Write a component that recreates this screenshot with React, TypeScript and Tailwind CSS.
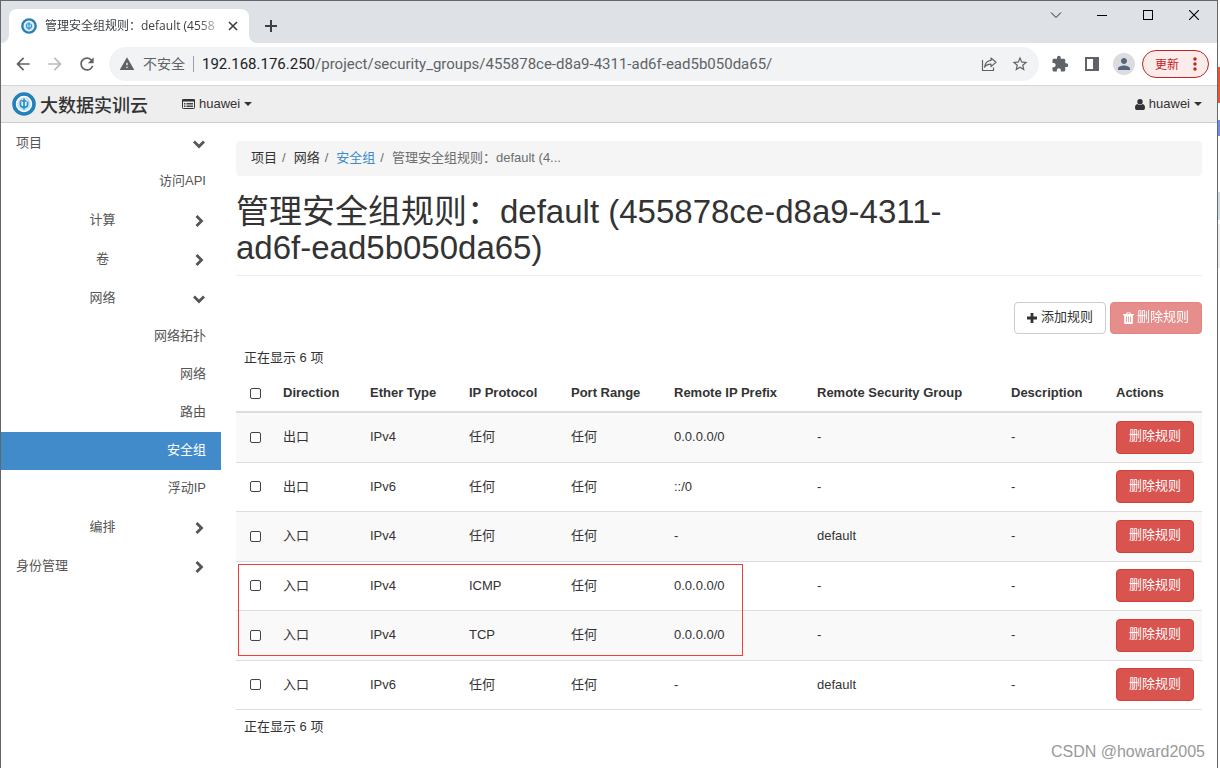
import React from 'react';
import { clsx } from 'clsx';
import {
  MdArrowBack,
  MdArrowForward,
  MdExtension,
  MdMoreVert,
  MdPerson,
  MdRefresh,
  MdStarBorder,
  MdWarning,
} from 'react-icons/md';

interface Rule {
  direction: string;
  etherType: string;
  protocol: string;
  portRange: string;
  prefix: string;
  group: string;
  description: string;
}

const RULES: Rule[] = [
  { direction: '出口', etherType: 'IPv4', protocol: '任何', portRange: '任何', prefix: '0.0.0.0/0', group: '-', description: '-' },
  { direction: '出口', etherType: 'IPv6', protocol: '任何', portRange: '任何', prefix: '::/0', group: '-', description: '-' },
  { direction: '入口', etherType: 'IPv4', protocol: '任何', portRange: '任何', prefix: '-', group: 'default', description: '-' },
  { direction: '入口', etherType: 'IPv4', protocol: 'ICMP', portRange: '任何', prefix: '0.0.0.0/0', group: '-', description: '-' },
  { direction: '入口', etherType: 'IPv4', protocol: 'TCP', portRange: '任何', prefix: '0.0.0.0/0', group: '-', description: '-' },
  { direction: '入口', etherType: 'IPv6', protocol: '任何', portRange: '任何', prefix: '-', group: 'default', description: '-' },
];

const COLUMNS = [
  'Direction',
  'Ether Type',
  'IP Protocol',
  'Port Range',
  'Remote IP Prefix',
  'Remote Security Group',
  'Description',
  'Actions',
];

interface NavItem {
  label: string;
  kind: 'root' | 'group' | 'leaf';
  open?: boolean;
  active?: boolean;
}

const NAV: NavItem[] = [
  { label: '项目', kind: 'root', open: true },
  { label: '访问API', kind: 'leaf' },
  { label: '计算', kind: 'group' },
  { label: '卷', kind: 'group' },
  { label: '网络', kind: 'group', open: true },
  { label: '网络拓扑', kind: 'leaf' },
  { label: '网络', kind: 'leaf' },
  { label: '路由', kind: 'leaf' },
  { label: '安全组', kind: 'leaf', active: true },
  { label: '浮动IP', kind: 'leaf' },
  { label: '编排', kind: 'group' },
  { label: '身份管理', kind: 'root' },
];

const Emblem: React.FC<{ className?: string }> = ({ className }) => (
  <svg viewBox="0 0 24 24" className={className} aria-hidden="true">
    <circle cx="12" cy="12" r="10" fill="#fff" stroke="#2480b8" strokeWidth="3.6" />
    <circle cx="12" cy="12" r="6.2" fill="#d9edf8" stroke="#a5d3ec" strokeWidth="0.8" />
    <path
      d="M12 6.5v11M8.4 9.5v3.2c0 2 1.5 2.6 3.6 2.6s3.6-.6 3.6-2.6V9.5M9.5 9h5"
      fill="none"
      stroke="#2a8fcb"
      strokeWidth="1.7"
    />
    <path d="M8.2 9.2 10 8" stroke="#d9534f" strokeWidth="1.2" />
  </svg>
);

const ShareIcon: React.FC = () => (
  <svg viewBox="0 0 16 16" className="size-4" fill="none" stroke="#5f6368" strokeWidth="1.2" aria-hidden="true">
    <path d="M1.5 4v10.5h11V11.5" />
    <path d="M10 2l5 4.300-5 4.300V8.200c-3 0-4.900.8-6.400 3C4 7.500 6.200 4.800 10 4.400z" strokeLinejoin="round" />
  </svg>
);

const SidePanelIcon: React.FC = () => (
  <svg viewBox="0 0 14 14" className="size-3.5" aria-hidden="true">
    <path d="M0 0h14v14H0zM2 2v10h6V2z" fill="#5f6368" fillRule="evenodd" />
  </svg>
);

const Chevron: React.FC<{ open?: boolean }> = ({ open }) => (
  <svg
    viewBox="0 0 14 14"
    className="size-3.5"
    fill="none"
    stroke="currentColor"
    strokeWidth="2.8"
    aria-hidden="true"
  >
    <path d={open ? 'M2 4.500l5 5 5-5' : 'M4.500 2l5 5-5 5'} />
  </svg>
);

const Caret: React.FC = () => (
  <svg viewBox="0 0 8 4" className="ml-1 h-1 w-2" fill="currentColor" aria-hidden="true">
    <path d="M0 0h8L4 4z" />
  </svg>
);

const ListAltIcon: React.FC = () => (
  <svg viewBox="0 0 13 10" className="mr-1 h-2.5 w-[13px]" fill="none" stroke="currentColor" aria-hidden="true">
    <rect x="0.5" y="0.5" width="12" height="9" rx="0.8" />
    <path d="M0 1.500h13" strokeWidth="2" />
    <path d="M2 4.500h1.500M4.500 4.500H11M2 7.500h1.500M4.500 7.500H11M2 6h1.500M4.500 6H11" strokeWidth="0.9" />
  </svg>
);

const UserIcon: React.FC = () => (
  <svg viewBox="0 0 10 11" className="mr-1 h-[11px] w-2.5" fill="currentColor" aria-hidden="true">
    <circle cx="5" cy="2.800" r="2.700" />
    <path d="M2.400 4.900C.8 5.200 0 6.600 0 8.700 0 10.200.8 11 2 11h6c1.200 0 2-.8 2-2.300 0-2.100-.8-3.500-2.400-3.800a3.500 3.500 0 0 1-5.200 0z" />
  </svg>
);

const PlusIcon: React.FC = () => (
  <svg viewBox="0 0 10 10" className="mr-1 size-2.5" stroke="currentColor" strokeWidth="2.800" aria-hidden="true">
    <path d="M5 0v10M0 5h10" />
  </svg>
);

const TrashIcon: React.FC = () => (
  <svg viewBox="0 0 11 12" className="mr-[3px] h-3 w-[11px]" aria-hidden="true">
    <path
      d="M0 2h3l.6-1.500h3.800L8 2h3v1.200H9.900V11a1 1 0 0 1-1 1H2.100a1 1 0 0 1-1-1V3.200H0zM4.200 2h2.600l-.3-.7h-2z"
      fill="currentColor"
      fillRule="evenodd"
    />
    <path d="M3.500 4.600v5.500M5.500 4.600v5.500M7.500 4.600v5.500" stroke="#d9534f" strokeWidth="0.8" />
  </svg>
);

const TabStrip: React.FC = () => (
  <div className="flex h-[42px] items-end bg-[#dee1e6] pl-2">
    <div className="relative flex h-[34px] w-60 items-center rounded-t-lg bg-white pr-2 pl-3">
      <svg viewBox="0 0 8 8" className="absolute bottom-0 -left-2 size-2" aria-hidden="true">
        <path d="M8 0v8H0a8 8 0 0 0 8-8z" fill="#fff" />
      </svg>
      <svg viewBox="0 0 8 8" className="absolute -right-2 bottom-0 size-2" aria-hidden="true">
        <path d="M0 0v8h8a8 8 0 0 1-8-8z" fill="#fff" />
      </svg>
      <Emblem className="size-4 shrink-0" />
      <span className="ml-2 flex-1 whitespace-nowrap font-['Open_Sans','Noto_Sans_CJK_SC',sans-serif] text-xs text-[#3c4043] [mask-image:linear-gradient(to_right,black_85%,transparent)]">
        管理安全组规则：default (4558
      </span>
      <button type="button" aria-label="关闭标签页" className="flex size-4 items-center justify-center">
        <svg viewBox="0 0 10 10" className="size-2.5" stroke="#3c4043" strokeWidth="1.6" aria-hidden="true">
          <path d="M1 1l8 8M9 1L1 9" />
        </svg>
      </button>
    </div>
    <button type="button" aria-label="新标签页" className="mb-[10px] ml-[15px] flex size-3.5">
      <svg viewBox="0 0 14 14" className="size-3.5" stroke="#3c4043" strokeWidth="2" aria-hidden="true">
        <path d="M7 1v12M1 7h12" />
      </svg>
    </button>
    <div className="ml-auto flex items-center self-start pt-1">
      <button type="button" aria-label="搜索标签页" className="flex h-5 w-[46px] items-center justify-center">
        <svg viewBox="0 0 12 12" className="size-3" fill="none" stroke="#222" aria-hidden="true">
          <path d="M1 3.500l5 5 5-5" />
        </svg>
      </button>
      <button type="button" aria-label="最小化" className="flex h-5 w-[46px] items-center justify-center">
        <span className="h-px w-2.5 bg-black" />
      </button>
      <button type="button" aria-label="最大化" className="flex h-5 w-[46px] items-center justify-center">
        <span className="size-2.5 border border-black" />
      </button>
      <button type="button" aria-label="关闭" className="flex h-5 w-[46px] items-center justify-center">
        <svg viewBox="0 0 10 10" className="size-2.5" stroke="#000" strokeWidth="1.1" aria-hidden="true">
          <path d="M0 0l10 10M10 0L0 10" />
        </svg>
      </button>
    </div>
  </div>
);

const Toolbar: React.FC = () => (
  <div className="flex h-[43px] items-center border-b border-[#d5d6d8] bg-white pr-2 pl-3 text-[#5f6368]">
    <button type="button" aria-label="后退"><MdArrowBack className="size-5" /></button>
    <button type="button" aria-label="前进" className="ml-3 text-[#b8babd]"><MdArrowForward className="size-5" /></button>
    <button type="button" aria-label="重新加载" className="ml-3"><MdRefresh className="size-5" /></button>
    <div className="ml-3 flex h-[34px] flex-1 items-center rounded-full bg-[#f1f3f4] px-2.5 font-['Roboto','Noto_Sans_CJK_SC',sans-serif] text-[15px]">
      <MdWarning className="size-4" />
      <span className="ml-2 text-sm">不安全</span>
      <span className="mx-2 h-4 w-px bg-[#9aa0a6]" />
      <span className="flex-1 whitespace-nowrap">
        <span className="text-[#202124]">192.168.176.250</span>
        /project/security_groups/455878ce-d8a9-4311-ad6f-ead5b050da65/
      </span>
      <button type="button" aria-label="分享"><ShareIcon /></button>
      <button type="button" aria-label="收藏" className="ml-3.5"><MdStarBorder className="size-[18px]" /></button>
    </div>
    <button type="button" aria-label="扩展程序" className="ml-3"><MdExtension className="size-[18px]" /></button>
    <button type="button" aria-label="侧边栏" className="ml-4"><SidePanelIcon /></button>
    <button
      type="button"
      aria-label="个人资料"
      className="ml-3.5 flex size-[22px] items-center justify-center rounded-full bg-[#dadce0] text-[#56647c]"
    >
      <MdPerson className="size-[18px]" />
    </button>
    <button
      type="button"
      className="ml-[7px] flex h-7 w-[67px] items-center rounded-full border border-[#c5221f] bg-[#faeceb] pl-3 font-['Noto_Sans_CJK_SC',sans-serif] text-xs text-[#c5221f]"
    >
      更新
      <MdMoreVert className="ml-1.5 size-5 shrink-0" />
    </button>
  </div>
);

const SiteHeader: React.FC = () => (
  <header className="flex h-[37px] items-center border-b border-[#ccc] bg-[#eee] pr-[15px] pl-[11px] text-[#333]">
    <a href="#" className="flex items-center">
      <Emblem className="size-6" />
      <span className="ml-1 font-['Noto_Sans_CJK_SC',sans-serif] text-lg leading-6 font-medium">大数据实训云</span>
    </a>
    <button type="button" className="ml-[34px] flex items-center">
      <ListAltIcon />
      huawei
      <Caret />
    </button>
    <button type="button" className="ml-auto flex items-center">
      <UserIcon />
      huawei
      <Caret />
    </button>
  </header>
);

const Sidebar: React.FC = () => (
  <nav className="w-[220px] shrink-0 pt-px text-[#555]">
    {NAV.map((item, i) => {
      if (item.kind === 'leaf') {
        return (
          <a
            key={i}
            href="#"
            className={clsx(
              'flex h-[38px] items-center justify-end pr-[15px] pb-0.5',
              item.active && 'bg-[#428bca] text-white'
            )}
          >
            {item.label}
          </a>
        );
      }
      return (
        <button
          key={i}
          type="button"
          className={clsx(
            'flex h-[39px] w-full items-center pr-[15px]',
            item.kind === 'root' ? 'pl-[15px]' : 'pl-3'
          )}
        >
          <span className={clsx('flex-1 pb-0.5', item.kind === 'root' ? 'text-left' : 'text-center')}>
            {item.label}
          </span>
          <Chevron open={item.open} />
        </button>
      );
    })}
  </nav>
);

const Breadcrumb: React.FC = () => (
  <ol className="flex h-[35px] items-center rounded bg-[#f5f5f5] px-[15px] pb-0.5 text-[#6e6e6e]">
    <li className="text-[#333]">项目</li>
    <li aria-hidden="true" className="mr-2 ml-[5px]">/</li>
    <li className="text-[#333]">网络</li>
    <li aria-hidden="true" className="mr-2 ml-[5px]">/</li>
    <li><a href="#" className="text-[#428bca]">安全组</a></li>
    <li aria-hidden="true" className="mr-2 ml-[5px]">/</li>
    <li>管理安全组规则：default (4...</li>
  </ol>
);

const Check: React.FC<{ label: string }> = ({ label }) => (
  <input
    type="checkbox"
    aria-label={label}
    className="mx-auto block size-[11px] appearance-none rounded-[2px] border border-[#444] bg-white checked:bg-[#428bca]"
  />
);

const RulesTable: React.FC = () => (
  <div className="relative">
    <table className="w-full table-fixed border-collapse text-left">
      <caption className="px-2 text-left leading-[34px]">正在显示 6 项</caption>
      <colgroup>
        <col className="w-[39px]" />
        <col className="w-[87px]" />
        <col className="w-[99px]" />
        <col className="w-[102px]" />
        <col className="w-[103px]" />
        <col className="w-[143px]" />
        <col />
        <col className="w-[105px]" />
        <col className="w-[94px]" />
      </colgroup>
      <thead>
        <tr className="h-[37px] border-b-2 border-[#ddd]">
          <th className="px-2"><Check label="全选" /></th>
          {COLUMNS.map((name) => (
            <th key={name} className="px-2 font-bold whitespace-nowrap">{name}</th>
          ))}
        </tr>
      </thead>
      <tbody>
        {RULES.map((rule, i) => (
          <tr key={i} className="border-b border-[#ddd] odd:h-[50px] odd:bg-[#f9f9f9] even:h-[49px]">
            <td className="px-2"><Check label={`选择规则 ${i + 1}`} /></td>
            <td className="px-2">{rule.direction}</td>
            <td className="px-2">{rule.etherType}</td>
            <td className="px-2">{rule.protocol}</td>
            <td className="px-2">{rule.portRange}</td>
            <td className="px-2">{rule.prefix}</td>
            <td className="px-2">{rule.group}</td>
            <td className="px-2">{rule.description}</td>
            <td className="px-2">
              <button
                type="button"
                className="block h-[33px] w-full rounded border border-[#d43f3a] bg-[#d9534f] pb-0.5 text-white"
              >
                删除规则
              </button>
            </td>
          </tr>
        ))}
      </tbody>
    </table>
    <p className="px-2 leading-[34px]">正在显示 6 项</p>

    {/* Marks the ICMP and TCP ingress rules */}
    <div className="pointer-events-none absolute top-[223px] left-0.5 h-[92px] w-[505px] border border-[#f03c3c]" />
  </div>
);

// Sliver of the window that sits behind the browser
const BackgroundWindow: React.FC = () => (
  <div className="flex w-0.5 shrink-0 flex-col bg-white">
    <div className="h-[67px]" />
    <div className="h-9 bg-[#f4502a]" />
    <div className="mt-[17px] h-4 bg-[#6d8cf0]" />
    <div className="mt-14 h-7 bg-[#d5dbe3]" />
    <div className="mt-1 h-11 bg-[#eee]" />
  </div>
);

export default function App() {
  return (
    <div className="flex min-h-screen bg-white font-['Liberation_Sans','Noto_Sans_CJK_SC',sans-serif] text-[13px] leading-[18px] text-[#333]">
      <div className="relative flex min-w-0 flex-1 flex-col border-x border-t border-[#66676b]">
        <TabStrip />
        <Toolbar />
        <SiteHeader />
        <div className="flex flex-1">
          <Sidebar />
          <main className="min-w-0 flex-1 px-[15px] pt-[18px]">
            <Breadcrumb />
            <div className="mt-[18px] border-b border-[#eee] pb-[9px]">
              <h1 className="max-w-3/4 text-[33px] leading-9">
                管理安全组规则：default (455878ce-d8a9-4311-ad6f-ead5b050da65)
              </h1>
            </div>
            <div className="mt-[26px] mb-[7px] flex justify-end gap-1">
              <button type="button" className="flex h-8 items-center rounded border border-[#ccc] bg-white px-3">
                <PlusIcon />
                <span className="pb-0.5">添加规则</span>
              </button>
              <button
                type="button"
                disabled
                className="flex h-8 items-center rounded border border-[#d43f3a] bg-[#d9534f] px-3 text-white opacity-65"
              >
                <TrashIcon />
                <span className="pb-0.5">删除规则</span>
              </button>
            </div>
            <RulesTable />
          </main>
        </div>
        <span className="absolute right-3 bottom-1 text-base leading-6 text-[#999]">
          CSDN @howard2005
        </span>
      </div>
      <BackgroundWindow />
    </div>
  );
}
